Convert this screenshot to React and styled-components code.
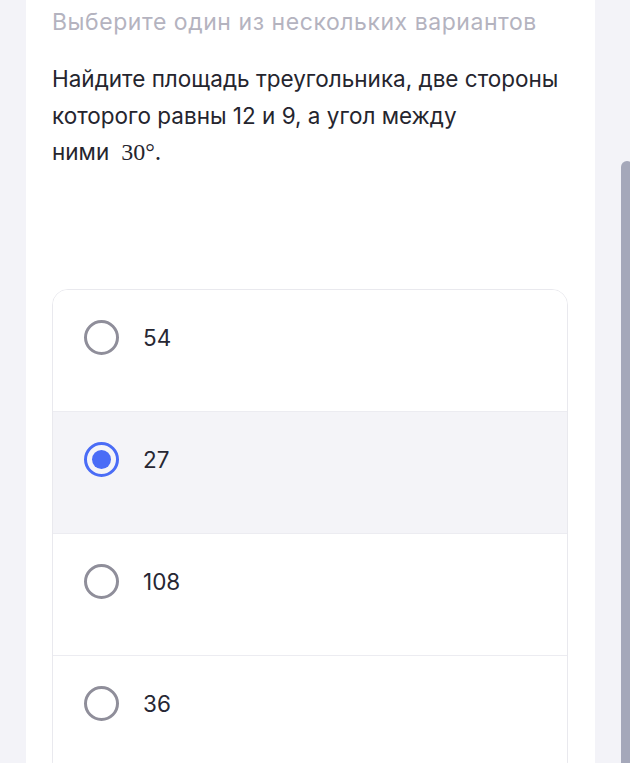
import React from "react";
import styled, { createGlobalStyle } from "styled-components";

const Global = createGlobalStyle`
  html, body { margin: 0; padding: 0; background: #f3f3f8; }
  body { font-family: Inter, "Noto Sans", sans-serif; overflow: hidden; }
`;

const Page = styled.div`
  position: relative;
  display: flex;
  height: 763px;
  overflow: hidden;
  background: #f3f3f8;
`;

const Panel = styled.main`
  margin-left: 26px;
  width: 569px;
  background: #ffffff;
  padding: 0 27px 0 26px;
  box-sizing: border-box;
  display: flex;
  flex-direction: column;
`;

const Hint = styled.div`
  font-size: 23px;
  line-height: 36px;
  color: #b4b3bf;
  padding-top: 4px;
  letter-spacing: 0.55px;
`;

const Question = styled.p`
  margin: 21px 0 0;
  font-size: 22.5px;
  line-height: 36.5px;
  color: #25252e;
  letter-spacing: 0;
`;

const NoWrap = styled.span`
  white-space: nowrap;
`;

const Math = styled.span`
  font-family: "Liberation Serif", "DejaVu Serif", serif;
  font-size: 24px;
  margin-left: 12px;
`;

const Card = styled.div`
  margin-top: 118px;
  border: 1px solid #e9e9ee;
  border-radius: 16px;
  overflow: hidden;
  display: flex;
  flex-direction: column;
  flex: none;
`;

const Row = styled.label`
  display: flex;
  align-items: flex-start;
  gap: 24px;
  height: 121px;
  box-sizing: content-box;
  padding: 0 0 0 31px;
  background: ${(p) => (p.$selected ? "#f4f4f8" : "#ffffff")};
  & + & { border-top: 1px solid #ececf1; }
  & > * { margin-top: 30px; }
`;

const Radio = styled.span`
  width: 35px;
  height: 35px;
  box-sizing: border-box;
  border-radius: 50%;
  border: 3px solid ${(p) => (p.$selected ? "#4a6cf6" : "#8f8e9a")};
  display: flex;
  align-items: center;
  justify-content: center;
  flex: none;
  &::after {
    content: "";
    display: ${(p) => (p.$selected ? "block" : "none")};
    width: 19px;
    height: 19px;
    border-radius: 50%;
    background: #4a6cf6;
  }
`;

const Value = styled.span`
  font-size: 22.5px;
  line-height: 35px;
  color: #272733;
`;

const Scroll = styled.div`
  position: absolute;
  left: 621px;
  top: 161px;
  width: 12px;
  height: 620px;
  border-radius: 6px;
  background: #a5a8ba;
`;

const options = [
  { v: "54" },
  { v: "27", selected: true },
  { v: "108" },
  { v: "36" },
];

export default function App() {
  return (
    <>
      <Global />
      <Page>
        <Panel>
          <Hint>Выберите один из нескольких вариантов</Hint>
          <Question>
            Найдите площадь треугольника, две стороны которого равны 12 и 9, а угол между{" "}
            <NoWrap>
              ними<Math>30°</Math>.
            </NoWrap>
          </Question>
          <Card>
            {options.map((o) => (
              <Row key={o.v} $selected={o.selected}>
                <Radio $selected={o.selected} />
                <Value>{o.v}</Value>
              </Row>
            ))}
          </Card>
        </Panel>
        <Scroll />
      </Page>
    </>
  );
}
